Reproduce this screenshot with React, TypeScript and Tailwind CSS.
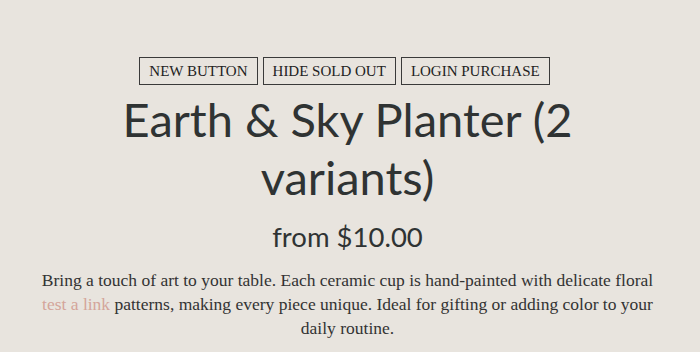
export default function App() {
  return (
    <div className="w-[700px] h-[352px] bg-[#e8e4de] overflow-hidden flex flex-col items-center pt-[57px] pr-[5px]">
      <div className="flex gap-[5px] mr-[6px] font-['Liberation_Serif',serif]">
        {["NEW BUTTON", "HIDE SOLD OUT", "LOGIN PURCHASE"].map((t) => (
          <button key={t} className="h-[28px] px-[9px] border border-[#3a3a3a] text-[15px] text-[#222] leading-none bg-transparent">
            {t}
          </button>
        ))}
      </div>
      <h1 className="mt-[5px] w-[520px] text-center text-[47px] leading-[58px] text-[#2f3333] font-['Lato',sans-serif] font-normal">
        Earth &amp; Sky Planter (2 variants)
      </h1>
      <div className="mt-[14px] text-[27.5px] leading-[34px] text-[#2f3333] font-['Lato',sans-serif]">
        from $10.00
      </div>
      <p className="mt-[14px] w-[622px] text-center text-[17.5px] leading-[24px] text-[#333] font-['Liberation_Serif',serif]">
        Bring a touch of art to your table. Each ceramic cup is hand-painted with delicate floral{" "}
        <a className="text-[#d4a59a]">test a link</a> patterns, making every piece unique. Ideal for gifting or adding color to your daily routine.
      </p>
    </div>
  );
}
